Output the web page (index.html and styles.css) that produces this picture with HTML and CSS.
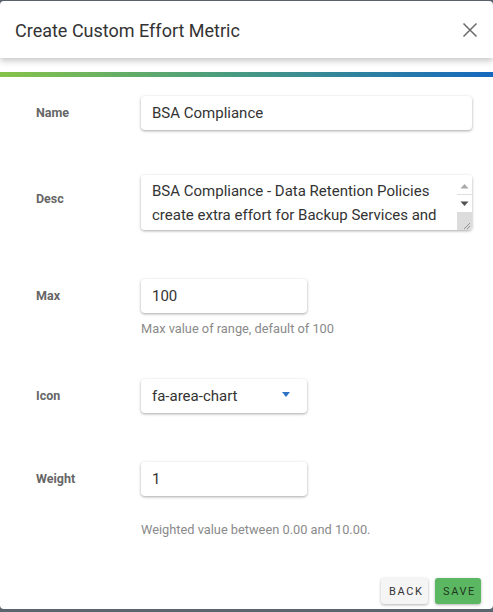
FILE: index.html
```html
<!DOCTYPE html>
<html>
<head>
<meta charset="utf-8">
<link rel="stylesheet" href="styles.css">
</head>
<body>
<div class="dialog">
  <div class="header">
    <div class="title">Create Custom Effort Metric</div>
    <svg class="close" width="16" height="16" viewBox="0 0 16 16"><path d="M1.5 1.5L14.5 14.5M14.5 1.5L1.5 14.5" stroke="#6b6b6b" stroke-width="1.5" fill="none"/></svg>
  </div>
  <div class="bar"></div>
  <div class="form">
    <div class="row row-name">
      <div class="label">Name</div>
      <div class="control"><div class="input wide">BSA Compliance</div></div>
    </div>
    <div class="row row-desc">
      <div class="label label-desc">Desc</div>
      <div class="control">
        <div class="textarea-wrap">
          <textarea class="textarea">BSA Compliance - Data Retention Policies create extra effort for Backup Services and Storage Operations teams.</textarea>
          <div class="scrollbar">
            <div class="sb-up"><svg width="9" height="6" viewBox="0 0 9 6"><path d="M0.5 5.5L4.5 1L8.5 5.5Z" fill="#a8a8a8"/></svg></div>
            <div class="sb-down"><svg width="9" height="6" viewBox="0 0 9 6"><path d="M0.5 0.5L4.5 5L8.5 0.5Z" fill="#505050"/></svg></div>
            <div class="sb-corner"><svg width="15" height="17" viewBox="0 0 15 17"><path d="M13 10L7 16M13 13L10 16" stroke="#8a8a8a" stroke-width="0.9" fill="none"/></svg></div>
          </div>
        </div>
      </div>
    </div>
    <div class="row row-max">
      <div class="label">Max</div>
      <div class="control">
        <div class="input narrow">100</div>
        <div class="hint">Max value of range, default of 100</div>
      </div>
    </div>
    <div class="row row-icon">
      <div class="label">Icon</div>
      <div class="control">
        <div class="input narrow select">
          <span class="select-text">fa-area-chart</span>
          <span class="caret"></span>
        </div>
      </div>
    </div>
    <div class="row row-weight">
      <div class="label">Weight</div>
      <div class="control">
        <div class="input narrow">1</div>
        <div class="hint hint-weight">Weighted value between 0.00 and 10.00.</div>
      </div>
    </div>
  </div>
  <div class="actions">
    <button class="btn back">BACK</button>
    <button class="btn save">SAVE</button>
  </div>
</div>
</body>
</html>
```
FILE: styles.css
```css
html, body {
  margin: 0;
  padding: 0;
}
body {
  background: #5b6570;
  width: 493px;
  height: 612px;
  overflow: hidden;
  font-family: Roboto, "Liberation Sans", sans-serif;
}
.dialog {
  margin-top: 1px;
  height: 608px;
  background: #fff;
  border-radius: 4px;
  display: flex;
  flex-direction: column;
}
.header {
  height: 57px;
  display: flex;
  align-items: center;
  justify-content: space-between;
  padding: 0 15px 0 15px;
  box-shadow: 0 3px 6px rgba(0,0,0,0.22);
  border-radius: 4px 4px 0 0;
}
.title {
  font-size: 18px;
  color: #333;
  padding-top: 1px;
}
.bar {
  margin-top: 14px;
  height: 5px;
  background: linear-gradient(to right, #86c34a, #4a9c7e 45%, #1468be);
}
.form {
  padding-left: 36px;
  padding-right: 21px;
}
.row {
  display: grid;
  grid-template-columns: 105px 1fr;
}
.row-name { margin-top: 19px; }
.row-desc { margin-top: 45px; }
.row-max { margin-top: 49px; }
.row-icon { margin-top: 43px; }
.row-weight { margin-top: 49px; }
.label {
  font-size: 12.5px;
  font-weight: 700;
  color: #666;
  height: 34px;
  line-height: 34px;
}
.label-desc {
  height: 48px;
  line-height: 48px;
}
.input {
  box-sizing: border-box;
  height: 34px;
  padding: 0 11px;
  font-size: 15px;
  line-height: 34px;
  color: #333;
  background: #fff;
  border-radius: 4px;
  box-shadow: 0 1px 3px rgba(0,0,0,0.35);
}
.wide { width: 331px; }
.narrow { width: 166px; }
.textarea-wrap {
  position: relative;
  width: 331px;
  height: 55px;
  border-radius: 4px;
  box-shadow: 0 1px 3px rgba(0,0,0,0.35);
  overflow: hidden;
}
.textarea {
  display: block;
  box-sizing: border-box;
  width: 331px;
  height: 55px;
  border: none;
  padding: 4px 26px 0 11px;
  font-family: Roboto, "Liberation Sans", sans-serif;
  font-size: 15px;
  line-height: 24px;
  color: #333;
  resize: none;
  outline: none;
  overflow: hidden;
  background: #fff;
}
.scrollbar {
  position: absolute;
  right: 0;
  top: 0;
  bottom: 0;
  width: 15px;
  display: flex;
  flex-direction: column;
  pointer-events: none;
}
.sb-up {
  height: 20px;
  display: flex;
  align-items: flex-end;
  justify-content: center;
  padding-bottom: 5px;
  box-sizing: border-box;
  border-bottom: 1px solid #dedede;
  background: #fff;
}
.sb-down {
  height: 17px;
  display: flex;
  align-items: center;
  justify-content: center;
  background: #fff;
}
.sb-corner {
  flex: 1;
  background: #dcdcdc;
  display: flex;
  align-items: flex-end;
}
.sb-corner svg { display: block; }
.hint {
  font-size: 12.8px;
  color: #8a8a8a;
  margin-top: 8px;
}
.hint-weight {
  margin-top: 26px;
}
.select {
  display: flex;
  align-items: center;
  justify-content: space-between;
  padding-right: 17px;
}
.caret {
  width: 0;
  height: 0;
  border-left: 4.5px solid transparent;
  border-right: 4.5px solid transparent;
  border-top: 5px solid #2f73c4;
  margin-top: -4px;
}
.actions {
  margin-top: auto;
  display: flex;
  justify-content: flex-end;
  gap: 7px;
  padding: 0 12px 5px 0;
}
.btn {
  border: none;
  height: 26px;
  border-radius: 3px;
  font-family: Roboto, "Liberation Sans", sans-serif;
  font-size: 11px;
  letter-spacing: 1.6px;
  padding: 0 8px;
  box-shadow: 0 1px 3px rgba(0,0,0,0.3);
  cursor: pointer;
}
.back {
  background: #f5f5f5;
  color: #333;
  width: 47px;
}
.save {
  background: #5cb762;
  color: #1c3a1e;
  width: 46px;
}
```
